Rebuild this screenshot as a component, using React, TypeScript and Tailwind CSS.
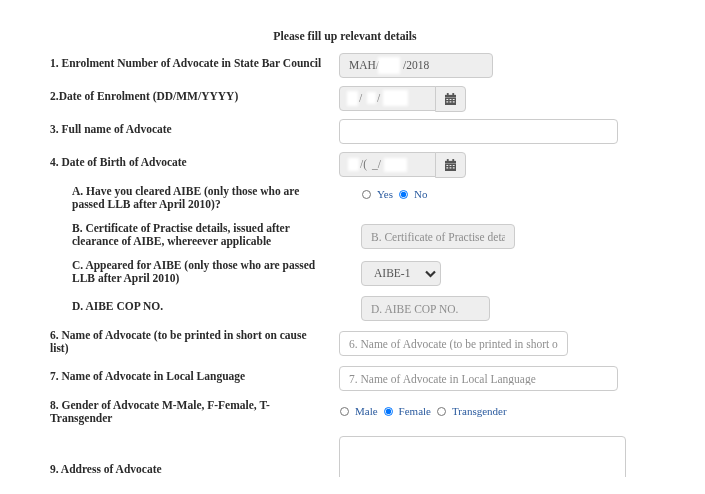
import type { ReactNode } from 'react';

const serif = "font-['Liberation_Serif','DejaVu_Serif',serif]";

function CalendarIcon() {
  return (
    <svg width="11" height="12" viewBox="0 0 12 13" fill="#555">
      <rect x="2" y="0" width="2" height="3" />
      <rect x="8" y="0" width="2" height="3" />
      <path d="M0 2h12v3H0z" />
      <path
        fillRule="evenodd"
        d="M0 5.500h12V13H0zM1.500 6.500v1.200h2V6.500zM5 6.500v1.200h2V6.500zM8.500 6.500v1.200h2V6.500zM1.500 9v1.200h2V9zM5 9v1.200h2V9zM8.500 9v1.200h2V9z"
      />
    </svg>
  );
}

function Row({ label, className, labelClass, children }: { label: ReactNode; className: string; labelClass: string; children: ReactNode }) {
  return (
    <div className={`flex ${className}`}>
      <div className={`w-[289px] shrink-0 text-[11.5px] leading-[13px] font-bold text-[#2a2a2a] ${labelClass}`}>{label}</div>
      <div>{children}</div>
    </div>
  );
}

function TextBox({ width, placeholder, disabled }: { width: string; placeholder?: string; disabled?: boolean }) {
  return (
    <input
      readOnly
      placeholder={placeholder}
      className={`${width} ${disabled ? 'bg-[#eee]' : 'bg-white'} block h-[25px] rounded border border-[#ccc] px-[9px] text-[11.5px] text-[#555] placeholder:text-[#8e8e8e] outline-none ${serif}`}
    />
  );
}

// white smudges hide personal details in the source picture
function Smudge({ className }: { className: string }) {
  return <span className={`absolute bg-white blur-[1.5px] ${className}`} />;
}

function DateBox({ children }: { children: ReactNode }) {
  return (
    <div className="flex">
      <div className="relative h-[25px] w-[97px] overflow-hidden rounded-l border border-[#ccc] bg-[#eee] text-[11.5px] leading-[13px] text-[#777]">
        {children}
      </div>
      <div className="-ml-px flex h-[26px] w-[31px] items-center justify-center rounded-r border border-[#ccc] bg-[#eee]">
        <CalendarIcon />
      </div>
    </div>
  );
}

function Radio({ name, text, checked }: { name: string; text: string; checked?: boolean }) {
  return (
    <label className="flex items-center gap-[6px] text-[11px] leading-[13px] text-[#2a5a9e]">
      <input type="radio" name={name} defaultChecked={checked} className="m-0 h-[9px] w-[9px] accent-[#0075ff]" />
      {text}
    </label>
  );
}

export default function App() {
  return (
    <div className={`h-[477px] w-[705px] overflow-hidden bg-white pl-[50px] blur-[0.3px] ${serif}`}>
      <div className="flex h-[53px] items-start justify-center pt-[30px] pr-[65px] text-[11.75px] leading-[13px] font-bold text-[#2a2a2a]">
        Please fill up relevant details
      </div>

      <Row label="1. Enrolment Number of Advocate in State Bar Council" className="h-[33px]" labelClass="pt-[4px]">
        <div className="relative flex h-[25px] w-[154px] items-center rounded border border-[#ccc] bg-[#eee] pl-[9px] text-[11.5px] text-[#555]">
          MAH/
          <span className="ml-[24px]">/2018</span>
          <Smudge className="top-[3px] left-[38px] h-[17px] w-[22px]" />
        </div>
      </Row>
      <Row label="2.Date of Enrolment (DD/MM/YYYY)" className="h-[33px]" labelClass="pt-[4px]">
        <DateBox>
          <span className="absolute top-[5px] left-[19px]">/</span>
          <span className="absolute top-[5px] left-[37px]">/</span>
          <Smudge className="top-[4px] left-[7px] h-[15px] w-[11px]" />
          <Smudge className="top-[5px] left-[27px] h-[12px] w-[9px]" />
          <Smudge className="top-[3px] left-[43px] h-[16px] w-[25px]" />
        </DateBox>
      </Row>
      <Row label="3. Full name of Advocate" className="h-[33px]" labelClass="pt-[4px]">
        <TextBox width="w-[279px]" />
      </Row>
      <Row label="4. Date of Birth of Advocate" className="h-[33px]" labelClass="pt-[4px]">
        <DateBox>
          <span className="absolute top-[5px] left-[20px]">/(</span>
          <span className="absolute top-[5px] left-[32px]">_/</span>
          <Smudge className="top-[5px] left-[8px] h-[13px] w-[11px]" />
          <Smudge className="top-[5px] left-[44px] h-[14px] w-[23px]" />
        </DateBox>
      </Row>

      <Row
        label={<>A. Have you cleared AIBE (only those who are<br />passed LLB after April 2010)?</>}
        className="h-[37px]"
        labelClass="pl-[22px]"
      >
        <div className="flex gap-[6px] pt-[3px] pl-[23px]">
          <Radio name="aibe" text="Yes" />
          <Radio name="aibe" text="No" checked />
        </div>
      </Row>
      <Row
        label={<>B. Certificate of Practise details, issued after<br />clearance of AIBE, whereever applicable</>}
        className="h-[37px]"
        labelClass="pl-[22px]"
      >
        <div className="pt-[2px] pl-[22px]">
          <TextBox width="w-[154px]" placeholder="B. Certificate of Practise details" disabled />
        </div>
      </Row>
      <Row
        label={<>C. Appeared for AIBE (only those who are passed<br />LLB after April 2010)</>}
        className="h-[37px]"
        labelClass="pl-[22px]"
      >
        <div className="pt-[2px] pl-[22px]">
          <div className="flex h-[25px] w-[80px] items-center justify-between rounded border border-[#ccc] bg-[#eee] pt-px pr-[4px] pl-[12px] text-[11.5px] text-[#555]">
            AIBE-1
            <svg width="11" height="8" viewBox="0 0 11 8" fill="none" stroke="#333" strokeWidth="2.200">
              <path d="M1 1.500l4.500 4.500 4.500-4.500" />
            </svg>
          </div>
        </div>
      </Row>
      <Row label="D. AIBE COP NO." className="h-[33px]" labelClass="pt-[4px] pl-[22px]">
        <div className="pl-[22px]">
          <TextBox width="w-[129px]" placeholder="D. AIBE COP NO." disabled />
        </div>
      </Row>

      <Row
        label={<>6. Name of Advocate (to be printed in short on cause<br />list)</>}
        className="h-[37px]"
        labelClass=""
      >
        <div className="pt-[2px]">
          <TextBox width="w-[229px]" placeholder="6. Name of Advocate (to be printed in short on cause list)" />
        </div>
      </Row>
      <Row label="7. Name of Advocate in Local Language" className="h-[33px]" labelClass="pt-[4px]">
        <TextBox width="w-[279px]" placeholder="7. Name of Advocate in Local Language" />
      </Row>
      <Row
        label={<>8. Gender of Advocate M-Male, F-Female, T-<br />Transgender</>}
        className="h-[37px]"
        labelClass=""
      >
        <div className="flex gap-[6px] pt-[6px] pl-px">
          <Radio name="gender" text="Male" />
          <Radio name="gender" text="Female" checked />
          <Radio name="gender" text="Transgender" />
        </div>
      </Row>
      <Row label="9. Address of Advocate" className="h-[60px]" labelClass="pt-[27px]">
        <textarea readOnly className="block h-[80px] w-[287px] resize-none rounded border border-[#ccc] bg-white outline-none" />
      </Row>
    </div>
  );
}
